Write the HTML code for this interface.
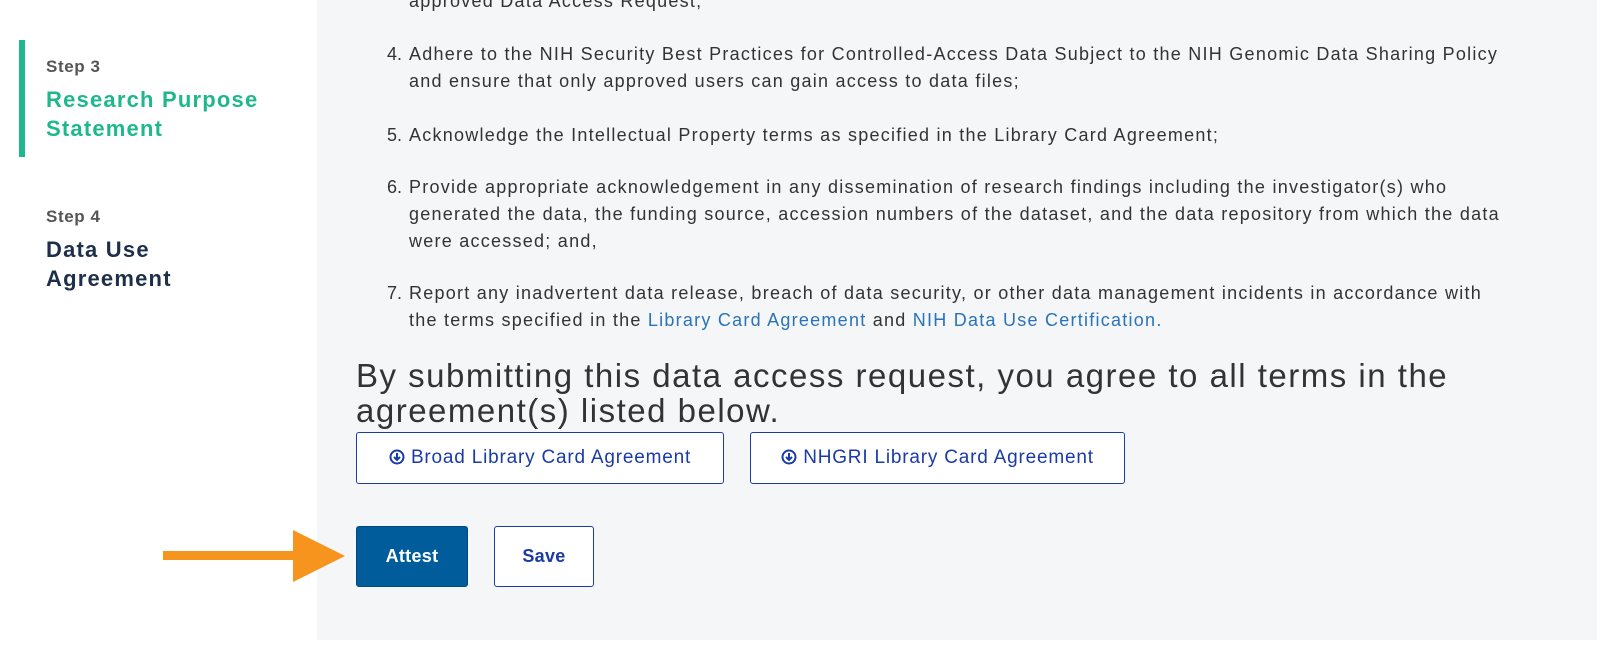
<!DOCTYPE html>
<html><head><style>
body{margin:0;width:1600px;height:660px;background:#fff;position:relative;overflow:hidden;font-family:"Liberation Sans",sans-serif}
.panel{position:absolute;left:317px;top:0;width:1280px;height:640px;background:#f5f6f8}
.t{position:absolute;white-space:nowrap;font-size:18px;color:#333;letter-spacing:1.25px}
.n{position:absolute;font-size:18px;color:#333}
a{color:#2a73b8;text-decoration:none}
.h{position:absolute;left:356px;font-size:33px;color:#333;white-space:nowrap;letter-spacing:1.5px}
.btn{position:absolute;box-sizing:border-box;border:1px solid #1a3aa8;border-radius:3px;background:#fff;color:#1a3aa8;font-size:19px;display:flex;align-items:center;justify-content:center;letter-spacing:0.8px}
.ic{margin-right:6px;position:relative;top:-1px}
</style></head><body>
<div class="panel"></div>
<div style="position:absolute;left:19px;top:40px;width:6px;height:117px;background:#1fb88e"></div>
<div style="position:absolute;left:46px;top:57px;font-size:17px;font-weight:bold;color:#555;letter-spacing:0.6px">Step 3</div>
<div style="position:absolute;left:46px;top:85px;font-size:22px;font-weight:bold;color:#1fb88e;line-height:29px;letter-spacing:1.2px">Research Purpose<br>Statement</div>
<div style="position:absolute;left:46px;top:207px;font-size:17px;font-weight:bold;color:#555;letter-spacing:0.6px">Step 4</div>
<div style="position:absolute;left:46px;top:235px;font-size:22px;font-weight:bold;color:#1e2f4a;line-height:29px;letter-spacing:1.2px">Data Use<br>Agreement</div>

<div class="t" style="left:409px;top:-9px">approved Data Access Request;</div>
<div class="n" style="left:387px;top:44px">4.</div>
<div class="t" style="left:409px;top:44px">Adhere to the NIH Security Best Practices for Controlled-Access Data Subject to the NIH Genomic Data Sharing Policy</div>
<div class="t" style="left:409px;top:71px">and ensure that only approved users can gain access to data files;</div>
<div class="n" style="left:387px;top:125px">5.</div>
<div class="t" style="left:409px;top:125px">Acknowledge the Intellectual Property terms as specified in the Library Card Agreement;</div>
<div class="n" style="left:387px;top:177px">6.</div>
<div class="t" style="left:409px;top:177px">Provide appropriate acknowledgement in any dissemination of research findings including the investigator(s) who</div>
<div class="t" style="left:409px;top:204px">generated the data, the funding source, accession numbers of the dataset, and the data repository from which the data</div>
<div class="t" style="left:409px;top:231px">were accessed; and,</div>
<div class="n" style="left:387px;top:283px">7.</div>
<div class="t" style="left:409px;top:283px">Report any inadvertent data release, breach of data security, or other data management incidents in accordance with</div>
<div class="t" style="left:409px;top:310px">the terms specified in the <a>Library Card Agreement</a> and <a>NIH Data Use Certification.</a></div>

<div class="h" style="top:357px">By submitting this data access request, you agree to all terms in the</div>
<div class="h" style="top:392px">agreement(s) listed below.</div>

<div class="btn" style="left:356px;top:432px;width:368px;height:52px"><svg class="ic" width="16" height="16" viewBox="0 0 16 16"><circle cx="8" cy="8" r="6.5" fill="none" stroke="#1a3aa8" stroke-width="2"/><path d="M8 4v7M5 8l3 3 3-3" fill="none" stroke="#1a3aa8" stroke-width="2"/></svg>Broad Library Card Agreement</div>
<div class="btn" style="left:750px;top:432px;width:375px;height:52px"><svg class="ic" width="16" height="16" viewBox="0 0 16 16"><circle cx="8" cy="8" r="6.5" fill="none" stroke="#1a3aa8" stroke-width="2"/><path d="M8 4v7M5 8l3 3 3-3" fill="none" stroke="#1a3aa8" stroke-width="2"/></svg>NHGRI Library Card Agreement</div>

<div class="btn" style="left:356px;top:526px;width:112px;height:61px;background:#005c9a;border-color:#004a80;color:#fff;font-weight:bold;font-size:18px;letter-spacing:0.3px">Attest</div>
<div class="btn" style="left:494px;top:526px;width:100px;height:61px;font-weight:bold;font-size:18px;letter-spacing:0.3px">Save</div>

<svg style="position:absolute;left:160px;top:530px" width="200" height="52">
<rect x="3" y="21" width="135" height="9" fill="#f7941d"/>
<polygon points="133,0 185,26 133,52" fill="#f7941d"/>
</svg>
</body></html>
